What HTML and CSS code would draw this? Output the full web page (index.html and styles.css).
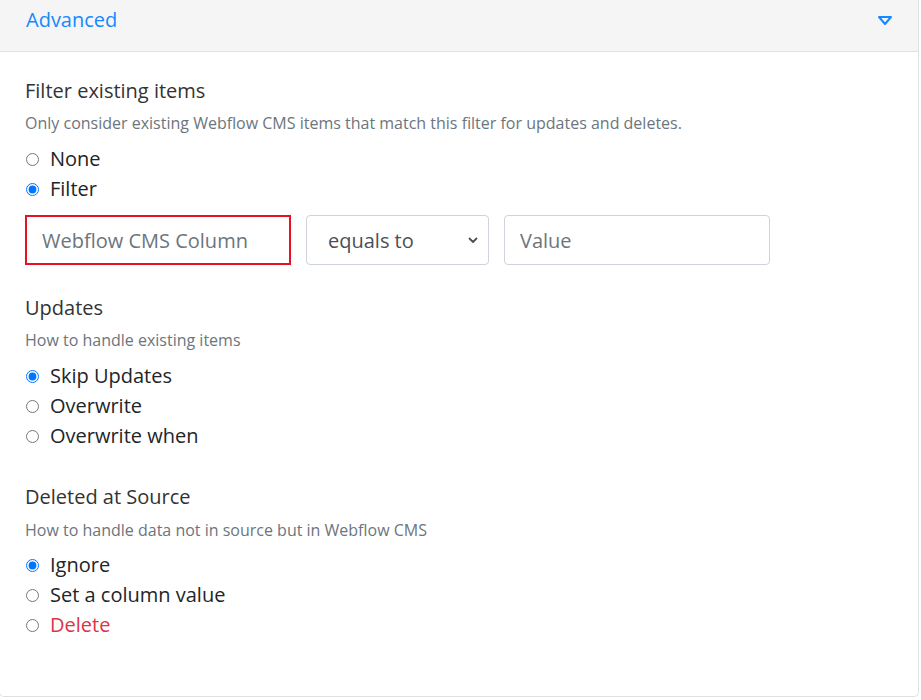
FILE: index.html
```html
<!DOCTYPE html>
<html lang="en">
<head>
    <meta charset="UTF-8">
    <title>Advanced</title>
    <link rel="stylesheet" href="styles.css">
</head>
<body>

<div class="card">
    <div class="card-header">
        <a class="toggle">Advanced</a>
        <svg class="caret" width="16" height="12" viewBox="0 0 16 12">
            <polygon points="2,2 14,2 8,9" fill="none" stroke="#1589ff" stroke-width="2" stroke-linejoin="round"/>
        </svg>
    </div>

    <div class="card-body">
        <div class="group">
            <div class="title">Filter existing items</div>
            <div class="help">Only consider existing Webflow CMS items that match this filter for updates and deletes.</div>
            <label class="radio"><input type="radio" name="filter"> None</label>
            <label class="radio"><input type="radio" name="filter" checked> Filter</label>

            <div class="filter-row">
                <input type="text" class="form-control column" placeholder="Webflow CMS Column">
                <div class="select-wrap">
                    <select class="form-control">
                        <option>equals to</option>
                    </select>
                    <svg class="chevron" width="12" height="12" viewBox="0 0 12 12">
                        <path d="M2.5 4.5 L6 8 L9.5 4.5" fill="none" stroke="#495057" stroke-width="1.8" stroke-linecap="round" stroke-linejoin="round"/>
                    </svg>
                </div>
                <input type="text" class="form-control" placeholder="Value">
            </div>
        </div>

        <div class="group updates">
            <div class="title">Updates</div>
            <div class="help">How to handle existing items</div>
            <label class="radio"><input type="radio" name="updates" checked> Skip Updates</label>
            <label class="radio"><input type="radio" name="updates"> Overwrite</label>
            <label class="radio"><input type="radio" name="updates"> Overwrite when</label>
        </div>

        <div class="group deleted">
            <div class="title">Deleted at Source</div>
            <div class="help">How to handle data not in source but in Webflow CMS</div>
            <label class="radio"><input type="radio" name="deleted" checked> Ignore</label>
            <label class="radio"><input type="radio" name="deleted"> Set a column value</label>
            <label class="radio danger"><input type="radio" name="deleted"> Delete</label>
        </div>
    </div>
</div>

</body>
</html>
```

FILE: styles.css
```css
body {
    font-family: "Open Sans", "Noto Sans", sans-serif;
    margin: 0;
    padding: 0;
    background-color: white;
    color: #212529;
}
.card {
    width: 920px;
    height: 697px;
    margin-left: -1px;
    box-sizing: border-box;
    border: 1px solid #dee2e6;
    border-top: none;
    border-radius: 0 0 5px 5px;
    overflow: hidden;
}
.card-header {
    display: flex;
    justify-content: space-between;
    align-items: center;
    height: 52px;
    box-sizing: border-box;
    padding: 0 26px 12px 26px;
    background-color: #f5f5f5;
    border-bottom: 1px solid #dee2e6;
}
.toggle {
    color: #1589ff;
    font-size: 20px;
    line-height: 30px;
    cursor: pointer;
}
.caret {
    margin-right: -1px;
    margin-top: 2px;
}
.card-body {
    padding: 24px 25px 0 25px;
}
.title {
    font-size: 20px;
    line-height: 30px;
    margin-bottom: 5px;
    color: #333;
}
.help {
    font-size: 16px;
    line-height: 24px;
    color: #6c757d;
    margin-bottom: 9px;
}
.radio {
    display: flex;
    align-items: center;
    font-size: 20px;
    line-height: 30px;
    color: #212529;
}
.radio input {
    margin: 0 11px 0 1px;
    width: 13px;
    height: 13px;
}
.danger {
    color: #dc3545;
}
.filter-row {
    display: flex;
    gap: 15px;
    margin-top: 11px;
}
.form-control {
    box-sizing: border-box;
    height: 50px;
    width: 266px;
    padding: 0 15px;
    font-family: inherit;
    font-size: 20px;
    color: #495057;
    background-color: white;
    border: 1px solid #ced4da;
    border-radius: 4px;
    outline: none;
}
.form-control::placeholder {
    color: #6c757d;
}
.column {
    border: 2px solid #e81123;
    border-radius: 0;
}
.select-wrap {
    position: relative;
}
.select-wrap select {
    width: 183px;
    padding-left: 21px;
    appearance: none;
    -webkit-appearance: none;
}
.chevron {
    position: absolute;
    right: 10px;
    top: 19px;
    pointer-events: none;
}
.updates {
    margin-top: 28px;
}
.deleted {
    margin-top: 31px;
}
.deleted .help {
    margin-top: 6px;
    margin-bottom: 8px;
}
```
